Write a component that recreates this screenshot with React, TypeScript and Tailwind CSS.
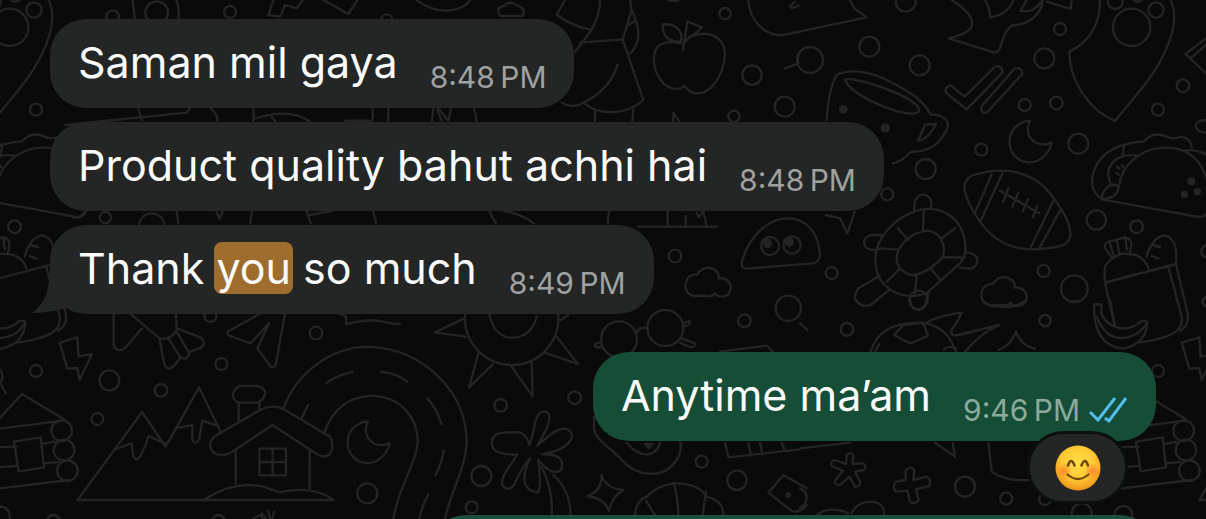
import { FC, ReactNode } from "react";

type Dot = [number, number, number];

// Wallpaper units are a third of a pixel wide.
const dots: Dot[] = [
  [338, 50, 19], [470, 38, 34], [690, 36, 18], [1160, 60, 17], [316, 653, 17], [455, 678, 38],
  [2175, 41, 17], [2256, 225, 29], [2354, 320, 30], [2202, 349, 17], [2025, 768, 19], [2365, 925, 38],
  [2310, 738, 27], [2376, 735, 26],
  [2717, 5, 30], [2608, 140, 30], [2430, 180, 39], [2759, 196, 30], [3180, 87, 18], [3133, 175, 30],
  [3074, 315, 18], [3169, 309, 19], [2944, 449, 18], [3235, 431, 30], [2777, 507, 30], [3289, 660, 29],
  [3131, 813, 18], [3223, 866, 40], [2495, 819, 18], [2662, 583, 18],
  [631, 948, 18], [948, 999, 19], [664, 1092, 18], [328, 1141, 30], [483, 1171, 19], [292, 1257, 18],
  [1102, 1480, 30], [160, 1565, 20], [655, 1565, 20],
  [2233, 962, 19], [1502, 1216, 19], [1724, 1193, 19], [1444, 1428, 30], [1415, 1522, 18],
  [2105, 1385, 18], [2211, 1441, 29], [1857, 1018, 54], [1996, 984, 54], [1535, 955, 140],
  [2755, 900, 28], [2541, 988, 19], [3135, 962, 17], [2895, 1460, 30], [3019, 1496, 18],
  [3245, 1540, 30], [3370, 1545, 27], [3135, 1497, 18],
];

// These sit on the seam and show up on both sides of the wallpaper.
const seamDots: Dot[] = [
  [3395, 82, 56], [3468, 30, 23], [3346, 5, 22], [3549, 257, 19], [3474, 329, 18], [3410, 680, 19],
  [3474, 1113, 18], [3551, 1292, 31], [3558, 1350, 31], [3568, 1412, 31],
];

const Dots: FC<{ items: Dot[] }> = ({ items }) => (
  <>
    {items.map(([x, y, r]) => (
      <circle key={`${x}-${y}`} cx={x} cy={y} r={r} />
    ))}
  </>
);

const SeamDoodles: FC = () => (
  <>
    <Dots items={seamDots} />
    <g transform="translate(2400 0)">
      {/* rocket */}
      <path d="M900 0Q900 110 808 155C808 240 865 330 945 363C990 305 1060 235 1095 155Q1140 60 1112 0M1000 0q12 10 24 0" />
      {/* taco */}
      <path d="M905 598Q865 570 880 518Q900 455 973 434Q1005 425 1032 424Q1060 392 1100 410Q1120 420 1145 410Q1175 418 1175 442M905 598L1195 651Q1218 652 1226 630M905 598C955 595 955 570 962 535C985 470 1045 445 1090 443C1165 440 1205 480 1222 545M1150 452Q1190 444 1240 475M973 434L968 466M1008 466C950 460 915 495 928 540Q932 555 938 556M905 598Q905 572 930 556Q950 550 955 565M952 500l6 6M966 496l4 6M950 520l6 4" />
      <g fill="#242424" stroke="none">
        <circle cx="1174" cy="544" r="12" />
        <circle cx="1153" cy="583" r="11" />
        <circle cx="1192" cy="575" r="11" />
      </g>
      {/* grocery bag */}
      <path d="M937 773L915 745Q913 725 930 724L975 712Q995 715 994 735L990 757M928 726l14 42M950 720l8 40M976 714l5 35M915 802Q918 785 960 762Q1030 755 1045 805M922 846L1128 792M915 802Q910 830 922 880L945 980M1040 770Q1055 715 1090 706Q1135 710 1128 792M1058 735l22 6M1055 768l20 8M1105 800L1145 950Q1150 980 1120 1000Q1080 1020 1015 1028M1128 792L1163 940Q1170 975 1140 992" />
      {/* banana */}
      <path d="M882 912L905 914L903 940C925 990 985 1000 1026 962L1042 965Q1040 1030 970 1046C905 1040 880 990 882 912M890 950Q920 1030 990 1010Q1022 1000 1040 970" />
      {/* lightning */}
      <path d="M1145 1028L1198 1012L1202 1070L1242 1062L1205 1140L1198 1104L1168 1106Z" />
      {/* log cabin */}
      <path d="M966 1254L1032 1182L1158 1258M950 1288L1155 1262M950 1342L1015 1340M1092 1332L1130 1325M960 1402L1015 1398M1098 1390L1140 1386M950 1467L1175 1440M1008 1325L1088 1312L1098 1402L1022 1414Z" />
    </g>
  </>
);

const Wallpaper: FC = () => (
  <svg
    className="absolute inset-0 h-full w-full"
    viewBox="0 0 3618 1557"
    preserveAspectRatio="xMidYMid slice"
    fill="none"
    stroke="#242424"
    strokeWidth="7"
    strokeLinejoin="round"
    strokeLinecap="round"
    aria-hidden="true"
  >
    <Dots items={dots} />
    <SeamDoodles />
    <g transform="translate(-3366 0)">
      <SeamDoodles />
    </g>

    {/* scraps peeking out between the top bubbles */}
    <path d="M398 0L404 55M528 0Q538 20 536 55M820 0L805 45L840 50L855 15L890 25L908 0M970 0L1045 42L1072 0" />
    <path d="M195 375L560 338L570 325M415 328l12 34M632 325q20 15 20 38M760 325v38M765 355C830 335 890 335 930 365M815 350l12 15M1035 362h75M1118 325v38M1165 325v38M1315 325l30 38l8-38M1300 325l-4 38M1312 330l14 34M1422 325l8 38" />
    <path d="M220 652h20l15-18M530 635l5 35M650 635l8 22l10-22M755 635l-4 35M920 635l12 35M930 645l65-12M1120 635l8 35M1468 635l20 35M1510 632q50 8 92 38M1828 635q-6 15-4 35M2003 635v42M2057 648v28M2110 635l10 42M2090 640l6 12l14-18M1915 680h235" />

    <g transform="translate(1200 0)">
      {/* plate and snack */}
      <path d="M50 0Q90 32 140 32Q195 28 210 0M300 48Q285 22 312 18Q330 0 350 15Q380 25 368 48ZM805 0q16 6 30 0" />
      {/* girl with a skirt */}
      <path d="M495 0L470 45Q520 80 568 88M600 0C600 70 560 110 525 155M540 128L668 118L730 300C680 345 600 350 550 308Q630 270 653 193M550 308Q520 328 485 308M690 0L695 30L668 118M695 30Q725 90 710 130Q700 155 690 160M680 78l25-15M585 335v28M700 328l-3 36M820 363v-25l18 26" />
      {/* apple */}
      <path d="M850 150C845 130 855 125 870 110C920 90 975 105 975 165C970 230 930 285 885 280Q865 275 853 258C840 270 815 272 790 250C755 210 755 160 775 138Q800 120 840 130M843 125C850 95 830 70 788 73C788 110 805 125 843 125M852 132L862 64L906 82Q890 100 870 110" />
      {/* cap */}
      <path d="M1045 0C1050 70 1100 108 1150 105L1400 52L1385 40Q1360 30 1350 0M1170 20l14-15M1175 25l22-8M1155 205L1195 190Q1190 170 1200 155" />
      {/* helmet with eyes */}
      <path d="M1025 790C1040 720 1100 655 1160 655C1220 655 1255 695 1260 765Q1258 785 1240 790L1040 806Q1022 804 1025 790" />
      <g fill="#242424" stroke="none">
        <circle cx="1103" cy="730" r="14" />
        <circle cx="1168" cy="726" r="14" />
      </g>
      {/* cloud */}
      <path id="cloud" d="M885 888Q855 885 856 852Q862 822 892 823Q905 800 930 804Q958 810 956 835Q985 832 993 860Q992 888 965 890Q950 890 945 880Q935 892 915 887Z" />
    </g>

    <g transform="translate(2400 0)">
      <use href="#cloud" x="-312" y="28" />
      {/* dinosaur */}
      <path d="M455 0C500 30 520 50 515 80Q505 100 447 115L580 157Q595 158 600 145Q612 95 635 77Q710 70 728 10M555 0Q572 30 570 52Q625 45 640 0M662 32Q700 42 728 0M662 32L680 0M740 5L812 27L815 0" />
      {/* double check */}
      <path d="M440 280Q430 262 452 256L494 290L585 200Q608 195 607 218L500 328ZM545 318L645 205Q668 202 667 222L562 336Q540 345 545 318" />
      {/* cup */}
      <path d="M80 360Q85 270 110 225C150 205 210 215 260 240C330 275 370 300 392 344C430 342 450 365 442 385C420 430 395 455 332 456Q305 485 278 490M135 238C170 230 350 290 358 330C350 370 145 290 135 238M408 372L375 374L354 422C380 420 395 395 408 372" />
      <g fill="#242424" stroke="none">
        <circle cx="130" cy="328" r="13" />
        <circle cx="256" cy="384" r="14" />
      </g>
      {/* moon */}
      <path id="moon" d="M690 362C650 365 625 395 629 435C640 500 730 510 755 430Q755 424 745 432C700 440 670 405 690 362" />
      {/* football */}
      <path d="M493 560Q495 535 520 525C640 490 720 530 765 600Q810 660 812 705Q805 735 780 738C680 760 600 750 540 665Q495 600 493 560M575 523L525 638M608 518L541 665M760 602L693 740M780 632L718 745M600 572L718 640M625 565l-16 42M655 578l-18 42M684 598l-16 36M712 618l-14 34" />
      {/* turtle */}
      <path d="M228 800C215 730 270 660 350 632C430 610 490 660 496 735Q500 765 480 790L385 875C320 910 235 870 228 800M290 780C290 730 340 695 385 692C430 700 440 750 425 775C400 800 370 825 335 825Q295 815 290 780M371 632L369 690M293 684L325 720M238 745L297 749M466 684L425 715M495 773L425 771M392 806L420 838M350 827L344 885M300 806L260 845M343 634Q340 585 370 583Q400 590 393 626M250 708Q195 695 192 728Q195 755 238 748M500 757Q535 762 532 785Q525 815 480 802M238 828L175 865Q150 900 190 918Q205 920 215 912L270 868M330 890Q330 930 358 930Q378 925 385 878M78 645L120 655L142 700L164 635" />
      {/* pyramids corner */}
      <path d="M1218 115L1156 162L1218 220M1175 172L1218 135M1218 360Q1185 362 1187 380Q1195 398 1218 397M1218 735q-14 5-14 20t14 16M1218 890q-10 5-10 16t10 14" />
    </g>

    <g transform="translate(0 900)">
      <use href="#moon" x="2814" y="-898" transform="translate(-2400 900)" />
      {/* bird tail and plane */}
      <path d="M341 40V135Q350 160 375 145L426 85M390 40L478 115Q515 120 530 90L528 40M478 115L492 190Q502 215 520 200L540 175M505 115L540 170Q560 185 568 160L530 95M532 85L600 112Q620 125 605 142L568 156M782 40L682 95Q680 105 690 108L752 130Q775 105 808 68L772 145L812 200Q825 205 828 190L855 40M1010 38l28 10v25Q1100 55 1150 65Q1180 75 1200 70" />
      {/* mountains */}
      <path d="M350 440L426 336L497 440L597 262L664 400M350 440L233 600H1000M345 448L395 430L400 470Q410 485 420 470L438 432L445 408L495 430M525 385L577 375V420Q588 438 598 415L607 362L648 376" />
      {/* house */}
      <path d="M630 440Q630 415 650 405L780 330Q820 310 855 330L990 410Q1005 440 990 462Q975 475 955 465L817 375L690 460Q640 475 630 440M707 450V550M929 452V565M716 360V312M778 325V308M716 308Q695 300 700 280Q705 260 725 258H770Q795 262 796 280Q790 305 770 308ZM615 598Q700 540 790 560L840 577Q940 555 1000 600M778 446H858V526H778ZM818 446V526M778 486H858" />
      {/* road */}
      <path d="M850 325C890 220 990 140 1110 140C1270 150 1395 270 1400 420C1400 500 1350 580 1335 657M972 400C1000 320 1050 290 1115 287C1200 290 1255 350 1253 430C1245 500 1195 560 1180 657M980 248Q1015 225 1058 215M1142 215Q1190 220 1222 245M905 355L924 315M1282 295Q1310 325 1325 373M1331 452Q1325 490 1307 525M1285 583Q1265 620 1258 657" />
      <path d="M0 620Q30 620 30 657M760 655l20-10l12 12M785 640l12 15M805 632l5 25M822 635l-5 20M0 210q15 20 0 40l18 30" />
    </g>

    <g transform="translate(1200 900)">
      {/* sun */}
      <path d="M268 40C275 90 305 113 335 113C375 112 400 90 410 50M193 55L104 98L197 110M235 160L207 263L278 193M335 200L398 290L395 187M432 157L534 192L468 107M482 60L505 45" />
      {/* glasses */}
      <path d="M711 95Q725 78 742 85M605 125L585 132Q582 145 606 142M848 70L868 63Q875 75 850 80M845 115L885 130Q885 148 862 138L840 128" />
      {/* palm tree */}
      <path d="M388 435C375 385 350 395 295 400Q265 415 280 445Q290 465 352 464C330 500 300 530 307 555Q325 580 345 550C360 510 375 495 390 475C365 530 365 570 412 578Q425 570 415 480C440 510 470 530 485 505Q495 460 427 463C480 455 520 430 515 400Q495 370 450 405Q420 430 412 437C440 390 460 350 440 335C400 325 405 400 388 435M425 500Q460 570 455 645M460 525Q510 570 512 645" />
      {/* avocado, star, croissant */}
      <path d="M582 350V385C585 420 630 440 665 480C710 530 790 540 830 480Q848 450 840 420M680 428Q710 465 745 463Q775 455 780 428M605 525Q615 565 670 570Q635 590 627 634Q615 595 562 588Q605 575 605 525M705 645Q710 600 740 590Q775 555 822 550Q900 550 918 590Q970 600 970 645M738 602L765 645M822 550Q835 600 835 645M918 575L908 645M960 155L1100 137L1118 155M975 428L985 472L1200 448M1045 428l8 38M1080 428l8 35M1145 428l10 25M1105 578L1150 525L1220 565M1105 578L1175 633Q1200 640 1220 615" />
      <path d="M735 432h22l-11 12z" fill="#242424" />
      <circle cx="1165" cy="585" r="5" fill="#242424" />
    </g>

    <g transform="translate(2400 900)">
      {/* football boot, ball */}
      <path d="M165 0Q200 35 230 0M0 70L22 90M212 155C230 90 290 65 370 68C430 80 450 110 468 155M282 105L310 75L370 68L384 108L330 130ZM225 155l12-22M432 148Q445 135 468 145M370 75Q400 50 485 38Q470 70 455 90Q450 110 475 105L598 75Q540 100 495 155M555 5Q570 25 600 18Q640 28 680 0M800 0Q820 12 845 0M930 0l15 80" />
      {/* sparkle */}
      <path d="M648 95Q660 135 705 147M648 95Q635 135 595 150" />
      {/* flower and plus */}
      <path d="M140 465Q150 455 160 465L158 492L190 490Q202 500 192 510L165 515L180 545Q180 562 165 560L148 530L120 555Q102 555 105 542L128 512L95 498Q90 482 105 480L138 492ZM316 512Q330 495 343 510L340 540L380 530Q395 540 388 558L348 568L356 600Q345 615 330 605L322 572L288 575Q275 562 288 545L318 540Z" />
      <path d="M405 428L465 470L458 428M0 445L150 428M565 428L575 515Q620 545 690 540M0 565Q30 580 15 610L0 625M50 645Q90 615 145 640M155 640Q170 605 215 605Q255 610 252 645M1218 565L1198 600h20" />
    </g>
  </svg>
);

const Tail: FC = () => (
  <svg className="absolute bottom-0 -left-5 h-12 w-10" viewBox="0 0 40 48" aria-hidden="true">
    <path d="M20 0C19 26 16 36 2 47C16 47 27 44 37 42L40 0Z" fill="#242626" />
  </svg>
);

const ReadTicks: FC = () => (
  <svg className="mb-1 ml-2 h-7 w-10" viewBox="0 0 40 28" role="img" aria-label="Read">
    <path d="M2 16L10 24L27 2M17 22L21 25L38 2" fill="none" stroke="#53bdeb" strokeWidth="3" />
  </svg>
);

const SmilingFace: FC = () => (
  <svg className="size-[46px]" viewBox="0 0 46 46" aria-hidden="true">
    <defs>
      <radialGradient id="face" cx="50%" cy="38%" r="62%">
        <stop offset="0" stopColor="#ffe04a" />
        <stop offset="0.6" stopColor="#ffc832" />
        <stop offset="1" stopColor="#f0921a" />
      </radialGradient>
      <radialGradient id="blush">
        <stop offset="0" stopColor="#ff7a2a" stopOpacity="0.8" />
        <stop offset="1" stopColor="#ff7a2a" stopOpacity="0" />
      </radialGradient>
    </defs>
    <circle cx="23" cy="23" r="22.5" fill="url(#face)" />
    <circle cx="8.5" cy="26" r="8" fill="url(#blush)" />
    <circle cx="37.5" cy="26" r="8" fill="url(#blush)" />
    <g fill="none" stroke="#74480c" strokeLinecap="round">
      <path d="M13 20.5Q16 11.5 19.5 20.5M26.5 20.5Q30 11.5 33 20.5" strokeWidth="2.6" />
      <path d="M12.5 29.5Q23 38.5 33.5 29.5" strokeWidth="2.2" />
    </g>
  </svg>
);

type BubbleProps = {
  time: string;
  sent?: boolean;
  tail?: boolean;
  children: ReactNode;
};

const Bubble: FC<BubbleProps> = ({ time, sent, tail, children }) => (
  <div
    className={`relative flex w-fit items-end rounded-[36px] px-7 pt-[17px] pb-[13px] ${
      sent ? "bg-[#164d37]" : "bg-[#242626]"
    }`}
  >
    {tail && <Tail />}
    <p className="relative pb-[7px] text-[43px] leading-[52px] text-[#fafafa]">{children}</p>
    <time
      className={`ml-8 text-[30px] leading-9 whitespace-nowrap ${
        sent ? "text-[#8bab9d]" : "text-[#a0a1a1]"
      }`}
    >
      {time}
    </time>
    {sent && <ReadTicks />}
  </div>
);

export default function App() {
  return (
    <main className="relative h-screen overflow-hidden bg-[#0a0a0a] font-['Inter',sans-serif]">
      <Wallpaper />
      <div className="relative flex flex-col gap-3.5 px-[50px] pt-[19px]">
        <Bubble time={"8:48\u2009PM"}>Saman mil gaya</Bubble>
        <Bubble time={"8:48\u2009PM"}>Product quality bahut achhi hai</Bubble>
        <Bubble time={"8:49\u2009PM"} tail>
          Thank <mark className="-mx-0.5 rounded-lg bg-[#9e6d2d] px-0.5 text-[#fafafa]">you</mark> so
          much
        </Bubble>
        <div className="relative mt-6 self-end">
          <Bubble time={"9:46\u2009PM"} sent>
            Anytime ma’am
          </Bubble>
          <button
            type="button"
            aria-label="Reaction: smiling face"
            className="absolute top-[79px] right-7 flex h-[73px] w-[101px] items-center justify-center rounded-full border-3 border-[#0b100e] bg-[#242626]"
          >
            <SmilingFace />
          </button>
        </div>
        <div className="mt-15 h-22 w-[726px] max-w-full self-end rounded-[36px] bg-[#1c4d3e]" />
      </div>
    </main>
  );
}
